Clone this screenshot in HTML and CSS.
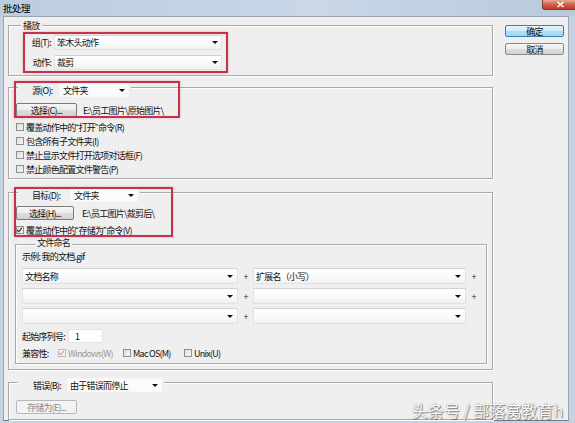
FILE: index.html
```html
<!DOCTYPE html>
<html lang="zh-CN">
<head>
<meta charset="utf-8">
<title>批处理</title>
<link rel="stylesheet" href="styles.css">
</head>
<body>
<div class="window">
  <div class="titlebar">
    <span class="title">批处理</span>
    <span class="close"><svg width="9" height="7" viewBox="0 0 9 7"><path d="M1.5 1 L7.5 6 M7.5 1 L1.5 6" stroke="#fff" stroke-width="1.6" fill="none"/></svg></span>
  </div>
  <div class="frame">
    <div class="client">
      <div class="main">

        <section class="group g-play">
          <div class="legend lg-play">播放</div>
          <div class="field first">
            <span class="lbl">组(T):</span>
            <div class="select s-play">笨木头动作<i class="arrow"></i></div>
          </div>
          <div class="field">
            <span class="lbl">动作:</span>
            <div class="select s-play">裁剪<i class="arrow"></i></div>
          </div>
        </section>

        <section class="group g-src">
          <div class="legend lg-ctl">
            <span class="lg-lbl w-src">源(O):</span>
            <div class="select flat s-src">文件夹<i class="arrow"></i></div>
          </div>
          <div class="btnrow r-src">
            <span class="btn b-choose">选择(C)...</span>
            <span class="path p-src">E:\员工图片\原始图片\</span>
          </div>
          <div class="checks">
            <label class="check"><i class="box"></i>覆盖动作中的<span class="q">“</span>打开<span class="q">”</span>命令(R)</label>
            <label class="check"><i class="box"></i>包含所有子文件夹(I)</label>
            <label class="check"><i class="box"></i>禁止显示文件打开选项对话框(F)</label>
            <label class="check"><i class="box"></i>禁止颜色配置文件警告(P)</label>
          </div>
        </section>

        <section class="group g-dst">
          <div class="legend lg-ctl">
            <span class="lg-lbl w-dst">目标(D):</span>
            <div class="select flat s-dst">文件夹<i class="arrow"></i></div>
          </div>
          <div class="btnrow r-dst">
            <span class="btn b-choose2">选择(H)...</span>
            <span class="path p-dst">E:\员工图片\裁剪后\</span>
          </div>
          <label class="check c-save"><i class="box on"><svg width="8" height="8" viewBox="0 0 8 8"><path d="M1.3 4 L3.2 6 L6.8 1.5" stroke="#2b2b2b" stroke-width="1.3" fill="none"/></svg></i>覆盖动作中的<span class="q">“</span>存储为<span class="q">”</span>命令(V)</label>

          <section class="group g-name">
            <div class="legend lg-name">文件命名</div>
            <div class="example">示例: 我的文档.gif</div>
            <div class="namegrid">
              <div class="select s-name">文档名称<i class="arrow"></i></div>
              <span class="plus">+</span>
              <div class="select s-name">扩展名（小写）<i class="arrow"></i></div>
              <span class="plus">+</span>

              <div class="select s-name"><i class="arrow"></i></div>
              <span class="plus">+</span>
              <div class="select s-name"><i class="arrow"></i></div>
              <span class="plus">+</span>

              <div class="select s-name"><i class="arrow"></i></div>
              <span class="plus">+</span>
              <div class="select s-name"><i class="arrow"></i></div>
              <span></span>
            </div>
            <div class="seqrow">
              <span class="seq-lbl">起始序列号:</span>
              <span class="input">1</span>
            </div>
            <div class="compat">
              <span class="compat-lbl">兼容性:</span>
              <label class="check opt o-win disabled"><i class="box on"><svg width="8" height="8" viewBox="0 0 8 8"><path d="M1.3 4 L3.2 6 L6.8 1.5" stroke="#a9a9a9" stroke-width="1.3" fill="none"/></svg></i>Windows(W)</label>
              <label class="check opt o-mac"><i class="box"></i>Mac OS(M)</label>
              <label class="check opt o-unix"><i class="box"></i>Unix(U)</label>
            </div>
          </section>
        </section>

        <section class="group g-err">
          <div class="legend lg-ctl lg-err">
            <span class="lg-lbl w-err">错误(B):</span>
            <div class="select flat s-err">由于错误而停止<i class="arrow"></i></div>
          </div>
          <div class="btnrow r-err">
            <span class="btn disabled-btn">存储为(E)...</span>
          </div>
        </section>

      </div>
      <div class="side">
        <span class="btn ok">确定</span>
        <span class="btn cancel">取消</span>
      </div>
    </div>
  </div>
</div>

<div class="mark m1"></div>
<div class="mark m2"></div>
<div class="mark m3"></div>
<div class="watermark">头条号 / 部落窝教育h</div>
</body>
</html>
```

FILE: styles.css
```css
* { box-sizing: border-box; }

html, body { margin: 0; padding: 0; }

body {
  position: relative;
  width: 575px;
  height: 423px;
  overflow: hidden;
  background: #c4d2e1;
  font-family: "Noto Sans CJK SC", "Liberation Sans", sans-serif;
  font-size: 9px;
  letter-spacing: -0.75px;
  color: #111;
}

/* narrow western quotes inside the Chinese labels */
.q {
  font-family: "Liberation Sans", sans-serif;
  letter-spacing: 0;
}

/* window chrome */
.window {
  height: 423px;
  display: flex;
  flex-direction: column;
}

.titlebar {
  height: 16px;
  flex: none;
  display: flex;
  justify-content: space-between;
  align-items: flex-start;
  background: linear-gradient(to right, #bccde0, #c9d7e7 55%, #b9cadd);
}

.title {
  padding-left: 3px;
  line-height: 16px;
  font-size: 9.5px;
  letter-spacing: -0.5px;
  color: #000;
}

.close {
  width: 37px;
  height: 10px;
  margin-right: -4px;
  display: flex;
  align-items: center;
  justify-content: center;
  border: 1px solid #7d3a30;
  border-top: none;
  border-radius: 0 0 3px 3px;
  background: linear-gradient(#e9a995, #d0604a 50%, #bb3d26);
}

.frame {
  flex: 1;
  display: flex;
  padding: 0 6px 2px 3px;
}

.client {
  flex: 1;
  display: flex;
  background: #efefef;
  border: 1px solid #98a4b1;
  border-bottom-color: #6f7a86;
  padding-left: 4px;
}

.main {
  width: 485px;
  display: flex;
  flex-direction: column;
}

.side {
  margin-left: 12px;
  padding-top: 8px;
  display: flex;
  flex-direction: column;
  gap: 6px;
}

/* group boxes */
.group {
  display: flex;
  flex-direction: column;
  align-items: flex-start;
  border: 1px solid #a9a9a9;
  box-shadow: inset 1px 1px 0 #fff, 1px 1px 0 #fff;
}

.legend {
  display: flex;
  align-items: center;
  background: #efefef;
  white-space: nowrap;
}

.lg-play {
  height: 13px;
  margin: -7px 0 0 12px;
  padding: 0 2px;
}

.lg-ctl {
  height: 14px;
  margin: -5px 0 0 9px;
  padding: 0 2px 0 0;
}

.lg-lbl { padding-left: 14px; white-space: nowrap; }
.w-src { width: 40px; }
.w-dst { width: 50px; }
.w-err { width: 49px; padding-left: 15px; }

.lg-name {
  height: 13px;
  margin: -9px 0 0 13px;
  padding: 0 2px;
}

.g-play { margin-top: 8px; padding-bottom: 5px; align-self: stretch; }
.g-src  { margin-top: 11px; padding-bottom: 2px; align-self: stretch; }
.g-dst  { margin-top: 13px; align-self: stretch; }
.g-err  { margin-top: 12px; flex: 1; align-self: stretch; }

/* label + dropdown rows */
.field {
  display: flex;
  align-items: center;
  height: 15px;
  margin-top: 5px;
}
.field.first { margin-top: 3px; }

.lbl {
  width: 43px;
  text-align: right;
  padding-right: 1px;
  white-space: nowrap;
}

.select {
  position: relative;
  display: flex;
  align-items: center;
  padding-left: 2px;
  white-space: nowrap;
  background: linear-gradient(#ffffff, #fbfbfb 50%, #f1f1f1);
  border: 1px solid #e2e2e2;
  border-top-color: #d2d2d2;
}

.select.flat {
  border-color: #f7f7f7;
  background: #fbfbfb;
  height: 14px;
}

.arrow {
  margin-left: auto;
  margin-right: 3px;
  width: 0;
  height: 0;
  border-left: 3px solid transparent;
  border-right: 3px solid transparent;
  border-top: 3px solid #111;
}

.s-play { width: 168px; height: 15px; margin-left: 2px; }
.s-src  { width: 70px; margin-left: 1px; padding-left: 3px; }
.s-dst  { width: 68px; margin-left: 2px; padding-left: 3px; }
.s-err  { width: 95px; margin-left: 0; padding-left: 2px; }

/* buttons */
.btn {
  display: flex;
  align-items: center;
  justify-content: center;
  border: 1px solid #7a7a7a;
  border-radius: 2px;
  background: linear-gradient(#f6f6f6, #ececec 50%, #dedede 50%, #d2d2d2);
  white-space: nowrap;
}

.btnrow {
  display: flex;
  align-items: center;
  height: 14px;
  margin-left: 7px;
}
.r-src { margin-top: 6px; }
.r-dst { margin-top: 4px; }
.r-err { margin-top: 8px; }

.b-choose  { width: 61px; height: 14px; }
.b-choose2 { width: 58px; height: 14px; }

.disabled-btn {
  width: 61px;
  height: 14px;
  color: #8a8a8a;
  border-color: #b4b8bc;
  background: #f3f3f3;
}

.path { white-space: nowrap; }
.p-src { margin-left: 6px; }
.p-dst { margin-left: 8px; }

.ok {
  width: 59px;
  height: 12px;
  border-color: #3c7fb1;
  background: linear-gradient(#e5f5fc, #c9ecfb 50%, #aee0f7 50%, #9fd8f3);
}

.cancel {
  width: 59px;
  height: 12px;
  border-color: #8a8a8a;
}

/* check boxes */
.checks {
  display: flex;
  flex-direction: column;
  margin-top: 3px;
}

.check {
  display: flex;
  align-items: center;
  height: 14px;
  white-space: nowrap;
}

.checks .check,
.c-save { margin-left: 7px; }
.c-save { margin-top: 3px; }

.box {
  width: 8px;
  height: 8px;
  margin-right: 2px;
  flex: none;
  display: flex;
  border: 1px solid #8e8f8f;
  background: linear-gradient(135deg, #dcdcdc, #f8f8f8);
}

.box svg { margin: -1px 0 0 -1px; }

/* file naming */
.g-name {
  align-self: stretch;
  margin: 7px 5px 5px 6px;
  padding: 0 0 3px 6px;
}

.example {
  height: 12px;
  margin-top: 1px;
  display: flex;
  align-items: center;
}

.namegrid {
  margin-top: 6px;
  display: grid;
  grid-template-columns: 216px 15px 213px 15px;
  grid-auto-rows: 16px;
  row-gap: 4px;
}

.s-name { height: 16px; }
.s-name .arrow { margin-right: 4px; }

.plus {
  display: flex;
  align-items: center;
  justify-content: center;
  color: #333;
}

.seqrow {
  display: flex;
  align-items: center;
  height: 14px;
  margin-top: 5px;
}

.seq-lbl { width: 46px; white-space: nowrap; }

.input {
  width: 35px;
  height: 14px;
  display: flex;
  align-items: center;
  padding-left: 6px;
  background: #fff;
  border: 1px solid #e4e4e4;
}

.compat {
  display: flex;
  align-items: center;
  height: 14px;
  margin-top: 3px;
}

.compat-lbl { width: 36px; white-space: nowrap; }
.o-win  { width: 65px; }
.o-mac  { width: 61px; }

.disabled { color: #9a9a9a; }
.disabled .box { border-color: #bcbcbc; background: #f4f4f4; }

/* annotation rectangles drawn on top of the dialog */
.mark {
  position: absolute;
  border: 2px solid #c1334e;
  box-shadow: 0 0 2px rgba(230, 110, 130, 0.6), inset 0 0 1px rgba(230, 110, 130, 0.5);
  pointer-events: none;
}
.m1 { left: 23px; top: 32px; width: 205px; height: 41px; }
.m2 { left: 14px; top: 81px; width: 166px; height: 37px; }
.m3 { left: 14px; top: 187px; width: 159px; height: 50px; }

.watermark {
  position: absolute;
  left: 412px;
  top: 398px;
  font-size: 16px;
  letter-spacing: 0;
  color: #fafafa;
  white-space: nowrap;
  text-shadow: 0 0 1px #6b6b6b, 1px 1px 1px rgba(0, 0, 0, 0.45);
}
```
